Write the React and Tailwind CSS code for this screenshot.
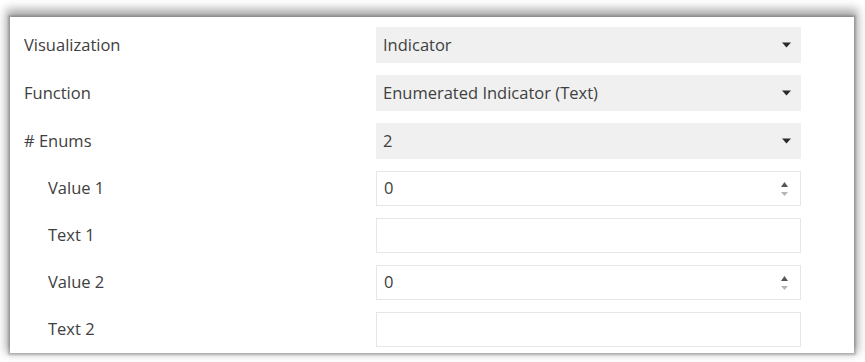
const rows = [
  { label: 'Visualization', kind: 'select', value: 'Indicator' },
  { label: 'Function', kind: 'select', value: 'Enumerated Indicator (Text)' },
  { label: '# Enums', kind: 'select', value: '2' },
  { label: 'Value 1', kind: 'spin', value: '0', indent: true },
  { label: 'Text 1', kind: 'text', value: '', indent: true },
  { label: 'Value 2', kind: 'spin', value: '0', indent: true },
  { label: 'Text 2', kind: 'text', value: '', indent: true },
];

function Caret() {
  return (
    <svg width="9" height="6" viewBox="0 0 9 6" className="mr-[10px]">
      <path d="M0 0.5h9L4.5 5.5z" fill="#2b2b2b" />
    </svg>
  );
}

function Spinner() {
  return (
    <div className="mr-[12px] flex flex-col items-center gap-[5px]">
      <svg width="7" height="5" viewBox="0 0 7 5">
        <path d="M3.5 0L7 5H0z" fill="#555" />
      </svg>
      <svg width="7" height="4" viewBox="0 0 7 4">
        <path d="M0 0h7L3.5 4z" fill="#b5b5b5" />
      </svg>
    </div>
  );
}

function Field({ kind, value }) {
  if (kind === 'select') {
    return (
      <div className="flex h-[36px] w-[425px] items-center justify-between bg-[#f0f0f0] pl-[7px]">
        <span>{value}</span>
        <Caret />
      </div>
    );
  }
  return (
    <div className="flex h-[35px] w-[425px] items-center justify-between border border-[#e6e6e6] bg-white pl-[7px]">
      <span>{value}</span>
      {kind === 'spin' && <Spinner />}
    </div>
  );
}

export default function App() {
  return (
    <div className="h-[362px] w-[865px] bg-white pl-[10px] pt-[17px]">
      <div
        className="flex h-[336px] w-[844px] flex-col gap-[12px] bg-white pt-[10px] text-[16.5px] text-[#404040] shadow-[0_-4px_9px_4px_rgba(0,0,0,0.33),0_0_2px_2px_rgba(0,0,0,0.2)]"
        style={{ fontFamily: '"Open Sans", "Noto Sans", sans-serif' }}
      >
        {rows.map((r) => (
          <div key={r.label} className="flex items-center">
            <div className={r.indent ? 'w-[366px] pl-[38px]' : 'w-[366px] pl-[14px]'}>{r.label}</div>
            <Field kind={r.kind} value={r.value} />
          </div>
        ))}
      </div>
    </div>
  );
}
